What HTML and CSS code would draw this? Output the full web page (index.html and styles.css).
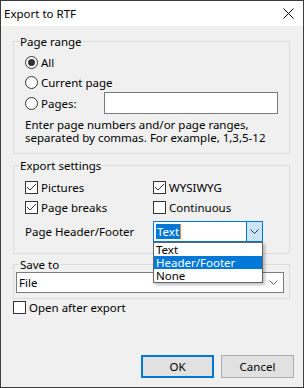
FILE: index.html
```html
<!DOCTYPE html>
<html lang="en">
<head>
  <meta charset="UTF-8">
  <title>Export to RTF</title>
  <link rel="stylesheet" href="styles.css">
</head>
<body>
  <div class="window">
    <div class="titlebar">
      <span class="title">Export to RTF</span>
      <svg class="close" width="11" height="11" viewBox="0 0 11 11">
        <path d="M0.5 0.5 L10.5 10.5 M10.5 0.5 L0.5 10.5" stroke="#000" stroke-width="1" fill="none"/>
      </svg>
    </div>

    <div class="content">
      <fieldset class="group range">
        <legend>Page range</legend>
        <div class="group-body">
          <div class="opt"><span class="radio checked"></span>All</div>
          <div class="opt"><span class="radio"></span>Current page</div>
          <div class="opt pages">
            <span class="pages-label"><span class="radio"></span>Pages:</span>
            <span class="textbox"></span>
          </div>
          <p class="hint">Enter page numbers and/or page ranges,<br>separated by commas. For example, 1,3,5-12</p>
        </div>
      </fieldset>

      <fieldset class="group settings">
        <legend>Export settings</legend>
        <div class="group-body">
          <div class="checks">
            <div class="opt"><span class="check on"><svg width="11" height="11" viewBox="0 0 11 11"><path d="M1 5 L4 8 L10 2" stroke="#333" fill="none"/></svg></span>Pictures</div>
            <div class="opt"><span class="check on"><svg width="11" height="11" viewBox="0 0 11 11"><path d="M1 5 L4 8 L10 2" stroke="#333" fill="none"/></svg></span>WYSIWYG</div>
            <div class="opt"><span class="check on"><svg width="11" height="11" viewBox="0 0 11 11"><path d="M1 5 L4 8 L10 2" stroke="#333" fill="none"/></svg></span>Page breaks</div>
            <div class="opt"><span class="check"></span>Continuous</div>
          </div>
          <div class="hf-row">
            <span class="hf-label">Page Header/Footer</span>
            <div class="combo focused">
              <span class="combo-text"><span class="sel">Text</span><span class="caret"></span></span>
              <span class="combo-btn">
                <svg width="9" height="5" viewBox="0 0 9 5"><path d="M0.5 0.5 L4.5 4.5 L8.5 0.5" stroke="#333" fill="none"/></svg>
              </span>
              <ul class="droplist">
                <li>Text</li>
                <li class="hot">Header/Footer</li>
                <li>None</li>
              </ul>
            </div>
          </div>
        </div>
      </fieldset>

      <fieldset class="group saveto">
        <legend>Save to</legend>
        <div class="group-body">
          <div class="combo plain">
            <span class="combo-text">File</span>
            <svg class="chev" width="9" height="5" viewBox="0 0 9 5"><path d="M0.5 0.5 L4.5 4.5 L8.5 0.5" stroke="#606060" fill="none"/></svg>
          </div>
        </div>
      </fieldset>

      <div class="opt open-after"><span class="check"></span>Open after export</div>

      <div class="buttons">
        <button class="btn default">OK</button>
        <button class="btn">Cancel</button>
      </div>
    </div>
  </div>
</body>
</html>
```

FILE: styles.css
```css
* {
  box-sizing: border-box;
}

body {
  margin: 0;
  font-family: "Noto Sans", sans-serif;
  font-size: 11.5px;
  color: #000;
}

.window {
  width: 304px;
  height: 388px;
  border: 1px solid #3c3c3c;
  background: #f0f0f0;
  display: flex;
  flex-direction: column;
}

.titlebar {
  height: 25px;
  flex: none;
  background: #fff;
  display: flex;
  align-items: center;
  padding-left: 3px;
}

.close {
  margin-left: auto;
  margin-right: 9px;
}

.content {
  flex: 1;
  display: flex;
  flex-direction: column;
  padding: 8px 9px 9px 12px;
}

.group {
  margin: 0 4px 0 0;
  padding: 0;
  border: 1px solid #dcdcdc;
  min-width: 0;
}

.group legend {
  margin-left: 5px;
  padding: 0 1px;
  line-height: 15px;
}

.group-body {
  padding: 3px 11px 9px 11px;
}

.opt {
  display: flex;
  align-items: center;
  height: 20px;
}

.radio {
  width: 13px;
  height: 13px;
  border: 1px solid #333;
  border-radius: 50%;
  background: #fff;
  margin-right: 3px;
  flex: none;
  display: flex;
  align-items: center;
  justify-content: center;
}

.radio.checked::after {
  content: "";
  width: 7px;
  height: 7px;
  border-radius: 50%;
  background: #333;
}

.pages {
  height: 22px;
}

.pages-label {
  display: flex;
  align-items: center;
  width: 80px;
}

.textbox {
  width: 176px;
  height: 22px;
  border: 1px solid #7a7a7a;
  background: #fff;
}

.hint {
  margin: 4px 0 0;
  line-height: 13px;
}

.settings {
  margin-top: 4px;
}

.settings .group-body {
  padding: 4px 11px 11px 11px;
}

.checks {
  display: grid;
  grid-template-columns: 128px 1fr;
}

.check {
  width: 13px;
  height: 13px;
  border: 1px solid #333;
  background: #fff;
  margin-right: 3px;
  flex: none;
}

.check svg {
  display: block;
}

.hf-row {
  display: flex;
  align-items: center;
  margin-top: 4px;
}

.hf-label {
  width: 128px;
}

.combo {
  position: relative;
  height: 21px;
  background: #fff;
  display: flex;
  align-items: center;
}

.combo.focused {
  width: 110px;
  border: 1px solid #0078d7;
}

.combo-text {
  flex: 1;
  display: flex;
  align-items: center;
  padding-left: 2px;
}

.sel {
  background: #0078d7;
  color: #fff;
  line-height: 15px;
  padding: 0 1px;
}

.caret {
  width: 1px;
  height: 15px;
  background: #e8823a;
}

.combo-btn {
  width: 16px;
  height: 19px;
  background: #cce4f7;
  border-left: 1px solid #0078d7;
  display: flex;
  align-items: center;
  justify-content: center;
}

.droplist {
  position: absolute;
  top: 100%;
  left: -1px;
  right: -1px;
  margin: 1px 0 0;
  padding: 0;
  list-style: none;
  background: #fff;
  border: 1px solid #646464;
  box-shadow: 2px 2px 3px rgba(0, 0, 0, 0.25);
  z-index: 2;
}

.droplist li {
  height: 13px;
  line-height: 13px;
  padding-left: 2px;
}

.droplist li.hot {
  background: #0078d7;
  color: #fff;
}

.saveto {
  margin-top: 3px;
}

.saveto .group-body {
  padding: 0 5px 5px 2px;
}

.combo.plain {
  border: 1px solid #7a7a7a;
}

.chev {
  margin-right: 5px;
}

.open-after {
  height: 16px;
}

.buttons {
  margin-top: auto;
  display: flex;
  justify-content: flex-end;
  gap: 7px;
}

.btn {
  width: 73px;
  height: 23px;
  font-family: inherit;
  font-size: 11.5px;
  background: #e1e1e1;
  border: 1px solid #adadad;
  padding: 0;
  color: #000;
}

.btn.default {
  border: 2px solid #0078d7;
}
```
